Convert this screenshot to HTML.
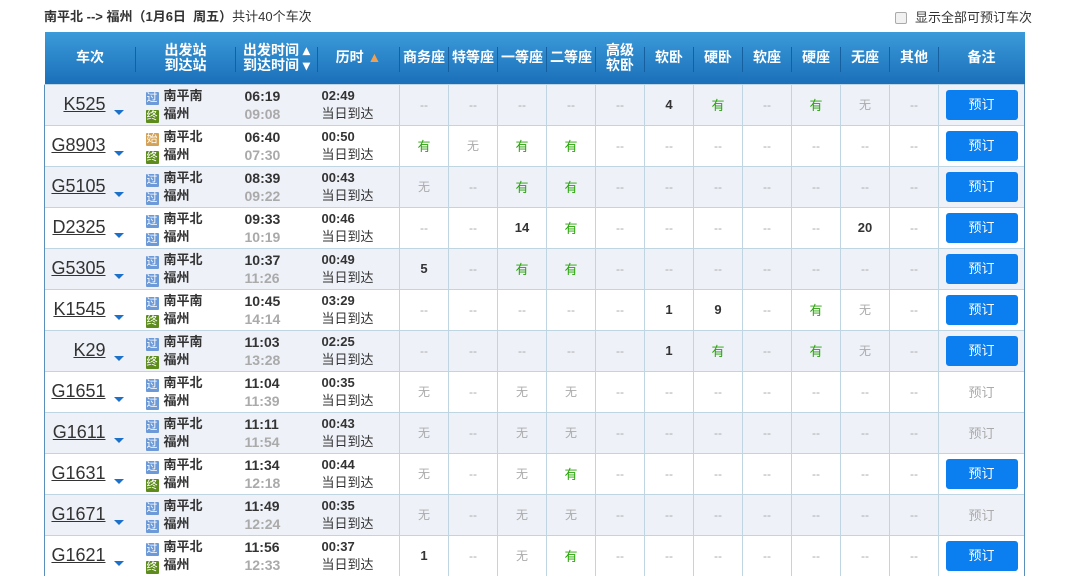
<!DOCTYPE html>
<html><head><meta charset="utf-8"><style>
*{margin:0;padding:0;box-sizing:border-box}
body{width:1088px;height:569px;overflow:hidden;background:#fff;font-family:"Liberation Sans","Noto Sans CJK SC",sans-serif;color:#333;position:relative}
.title{position:absolute;left:44px;top:6px;font-size:13px;font-weight:bold}
.title span{font-weight:normal}
.chk{position:absolute;left:895px;top:7px;font-size:13px}
.chk i{display:inline-block;width:12px;height:12px;border:1px solid #aaa;border-radius:2px;background:#f1f1f1;vertical-align:-2px;margin-right:8px}
table{position:absolute;left:44px;top:32px;width:980px;border-collapse:collapse;table-layout:fixed}
th{height:52px;background:linear-gradient(#3b9ad9,#1b70b9);color:#fff;font-size:14px;font-weight:bold;line-height:15px;position:relative}
th:after{content:"";position:absolute;right:0;top:15px;height:25px;border-right:1px solid #16609f}
th:last-child:after{display:none}
td{height:41px;border-top:1px solid #c0d5e2;font-size:13px;text-align:center;position:relative}
td.s{border-left:1px solid #c0d5e2;color:#aaa;font-size:12px}
td.last{border-right:1px solid #5a8fba}
td.first{border-left:1px solid #5a8fba}
tr.o td{background:#eef1f8}
.g{color:#26a306!important;font-size:13px!important}
.n{color:#333!important;font-weight:bold;font-size:13px!important}
.tn{text-align:right;padding-right:30px;font-size:18px;text-decoration:underline;color:#333}
.tn:after{content:"";position:absolute;right:12px;top:25px;border-left:5px solid transparent;border-right:5px solid transparent;border-top:5px solid #1b70c9}
.st{text-align:left;padding-left:10px;font-weight:bold;line-height:18px;font-size:13px}
.ic{display:inline-block;width:13px;height:13px;font-size:11px;line-height:13px;text-align:center;color:#fff;margin-right:5px;vertical-align:-1px;font-weight:normal;border-radius:1px}
.b{background:#6c9ad8}.y{background:#d4a256}.gr{background:#5d8c1d}
.tm{text-align:left;padding-left:9px;font-weight:bold;font-size:14px;line-height:18px}
.tm em{font-style:normal;color:#aaa}
.du{text-align:left;padding-left:4px;line-height:18px;font-size:13px}
.du b{font-size:13px}
.btn{display:inline-block;width:72px;height:30px;line-height:30px;background:#0b7ff0;color:#fff;border-radius:3px;font-size:13px}
.dis{color:#999}
</style></head><body>
<div class="title">南平北 --&gt; 福州（1月6日&nbsp; 周五）<span>共计40个车次</span></div>
<div class="chk"><i></i>显示全部可预订车次</div>
<table>
<colgroup><col style="width:91px"><col style="width:100px"><col style="width:82px"><col style="width:82px"><col span="11" style="width:49px"><col style="width:86px"></colgroup>
<tr><th>车次</th><th>出发站<br>到达站</th><th>出发时间 ▴<br>到达时间 ▾</th><th>历时 <span style="color:#f0a050">▲</span></th><th>商务座</th><th>特等座</th><th>一等座</th><th>二等座</th><th>高级<br>软卧</th><th>软卧</th><th>硬卧</th><th>软座</th><th>硬座</th><th>无座</th><th>其他</th><th>备注</th></tr>

<tr class="o"><td class="first tn">K525</td><td class="st"><span class="ic b">过</span>南平南<br><span class="ic gr">终</span>福州</td><td class="tm">06:19<br><em>09:08</em></td><td class="du"><b>02:49</b><br>当日到达</td><td class="s">--</td><td class="s">--</td><td class="s">--</td><td class="s">--</td><td class="s">--</td><td class="s n">4</td><td class="s g">有</td><td class="s">--</td><td class="s g">有</td><td class="s">无</td><td class="s">--</td><td class="s last"><span class="btn">预订</span></td></tr>

<tr><td class="first tn">G8903</td><td class="st"><span class="ic y">始</span>南平北<br><span class="ic gr">终</span>福州</td><td class="tm">06:40<br><em>07:30</em></td><td class="du"><b>00:50</b><br>当日到达</td><td class="s g">有</td><td class="s">无</td><td class="s g">有</td><td class="s g">有</td><td class="s">--</td><td class="s">--</td><td class="s">--</td><td class="s">--</td><td class="s">--</td><td class="s">--</td><td class="s">--</td><td class="s last"><span class="btn">预订</span></td></tr>

<tr class="o"><td class="first tn">G5105</td><td class="st"><span class="ic b">过</span>南平北<br><span class="ic b">过</span>福州</td><td class="tm">08:39<br><em>09:22</em></td><td class="du"><b>00:43</b><br>当日到达</td><td class="s">无</td><td class="s">--</td><td class="s g">有</td><td class="s g">有</td><td class="s">--</td><td class="s">--</td><td class="s">--</td><td class="s">--</td><td class="s">--</td><td class="s">--</td><td class="s">--</td><td class="s last"><span class="btn">预订</span></td></tr>

<tr><td class="first tn">D2325</td><td class="st"><span class="ic b">过</span>南平北<br><span class="ic b">过</span>福州</td><td class="tm">09:33<br><em>10:19</em></td><td class="du"><b>00:46</b><br>当日到达</td><td class="s">--</td><td class="s">--</td><td class="s n">14</td><td class="s g">有</td><td class="s">--</td><td class="s">--</td><td class="s">--</td><td class="s">--</td><td class="s">--</td><td class="s n">20</td><td class="s">--</td><td class="s last"><span class="btn">预订</span></td></tr>

<tr class="o"><td class="first tn">G5305</td><td class="st"><span class="ic b">过</span>南平北<br><span class="ic b">过</span>福州</td><td class="tm">10:37<br><em>11:26</em></td><td class="du"><b>00:49</b><br>当日到达</td><td class="s n">5</td><td class="s">--</td><td class="s g">有</td><td class="s g">有</td><td class="s">--</td><td class="s">--</td><td class="s">--</td><td class="s">--</td><td class="s">--</td><td class="s">--</td><td class="s">--</td><td class="s last"><span class="btn">预订</span></td></tr>

<tr><td class="first tn">K1545</td><td class="st"><span class="ic b">过</span>南平南<br><span class="ic gr">终</span>福州</td><td class="tm">10:45<br><em>14:14</em></td><td class="du"><b>03:29</b><br>当日到达</td><td class="s">--</td><td class="s">--</td><td class="s">--</td><td class="s">--</td><td class="s">--</td><td class="s n">1</td><td class="s n">9</td><td class="s">--</td><td class="s g">有</td><td class="s">无</td><td class="s">--</td><td class="s last"><span class="btn">预订</span></td></tr>

<tr class="o"><td class="first tn">K29</td><td class="st"><span class="ic b">过</span>南平南<br><span class="ic gr">终</span>福州</td><td class="tm">11:03<br><em>13:28</em></td><td class="du"><b>02:25</b><br>当日到达</td><td class="s">--</td><td class="s">--</td><td class="s">--</td><td class="s">--</td><td class="s">--</td><td class="s n">1</td><td class="s g">有</td><td class="s">--</td><td class="s g">有</td><td class="s">无</td><td class="s">--</td><td class="s last"><span class="btn">预订</span></td></tr>

<tr><td class="first tn">G1651</td><td class="st"><span class="ic b">过</span>南平北<br><span class="ic b">过</span>福州</td><td class="tm">11:04<br><em>11:39</em></td><td class="du"><b>00:35</b><br>当日到达</td><td class="s">无</td><td class="s">--</td><td class="s">无</td><td class="s">无</td><td class="s">--</td><td class="s">--</td><td class="s">--</td><td class="s">--</td><td class="s">--</td><td class="s">--</td><td class="s">--</td><td class="s last dis" style="font-size:13px">预订</td></tr>

<tr class="o"><td class="first tn">G1611</td><td class="st"><span class="ic b">过</span>南平北<br><span class="ic b">过</span>福州</td><td class="tm">11:11<br><em>11:54</em></td><td class="du"><b>00:43</b><br>当日到达</td><td class="s">无</td><td class="s">--</td><td class="s">无</td><td class="s">无</td><td class="s">--</td><td class="s">--</td><td class="s">--</td><td class="s">--</td><td class="s">--</td><td class="s">--</td><td class="s">--</td><td class="s last dis" style="font-size:13px">预订</td></tr>

<tr><td class="first tn">G1631</td><td class="st"><span class="ic b">过</span>南平北<br><span class="ic gr">终</span>福州</td><td class="tm">11:34<br><em>12:18</em></td><td class="du"><b>00:44</b><br>当日到达</td><td class="s">无</td><td class="s">--</td><td class="s">无</td><td class="s g">有</td><td class="s">--</td><td class="s">--</td><td class="s">--</td><td class="s">--</td><td class="s">--</td><td class="s">--</td><td class="s">--</td><td class="s last"><span class="btn">预订</span></td></tr>

<tr class="o"><td class="first tn">G1671</td><td class="st"><span class="ic b">过</span>南平北<br><span class="ic b">过</span>福州</td><td class="tm">11:49<br><em>12:24</em></td><td class="du"><b>00:35</b><br>当日到达</td><td class="s">无</td><td class="s">--</td><td class="s">无</td><td class="s">无</td><td class="s">--</td><td class="s">--</td><td class="s">--</td><td class="s">--</td><td class="s">--</td><td class="s">--</td><td class="s">--</td><td class="s last dis" style="font-size:13px">预订</td></tr>

<tr><td class="first tn">G1621</td><td class="st"><span class="ic b">过</span>南平北<br><span class="ic gr">终</span>福州</td><td class="tm">11:56<br><em>12:33</em></td><td class="du"><b>00:37</b><br>当日到达</td><td class="s n">1</td><td class="s">--</td><td class="s">无</td><td class="s g">有</td><td class="s">--</td><td class="s">--</td><td class="s">--</td><td class="s">--</td><td class="s">--</td><td class="s">--</td><td class="s">--</td><td class="s last"><span class="btn">预订</span></td></tr>
</table>
</body></html>
